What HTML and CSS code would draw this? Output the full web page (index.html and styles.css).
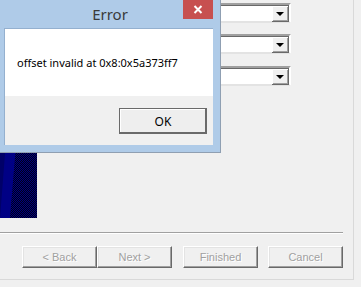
FILE: index.html
```html
<!DOCTYPE html>
<html lang="en">
<head>
    <meta charset="UTF-8">
    <meta name="viewport" content="width=device-width, initial-scale=1.0">
    <title>Setup Wizard</title>
    <link rel="stylesheet" href="styles.css">
</head>
<body>
    <div class="wizard">
        <div class="wizard-body">
            <div class="fields">
                <div class="combo"><span class="combo-value"></span><span class="combo-btn"><i class="arrow"></i></span></div>
                <div class="combo"><span class="combo-value"></span><span class="combo-btn"><i class="arrow"></i></span></div>
                <div class="combo"><span class="combo-value"></span><span class="combo-btn"><i class="arrow"></i></span></div>
            </div>
            <div class="art">
                <svg width="37" height="96" viewBox="0 0 37 96">
                    <defs>
                        <pattern id="dither" width="2" height="2" patternUnits="userSpaceOnUse">
                            <rect width="2" height="2" fill="#000018"/>
                            <rect x="0" y="0" width="1" height="1" fill="#000080"/>
                            <rect x="1" y="1" width="1" height="1" fill="#000080"/>
                        </pattern>
                    </defs>
                    <rect width="37" height="96" fill="#000068"/>
                    <polygon points="7.5,0 18,0 10,96 0,96" fill="#000085"/>
                    <polygon points="18,0 37,0 37,96 10,96" fill="url(#dither)"/>
                </svg>
            </div>
        </div>
        <div class="separator"></div>
        <div class="nav-buttons">
            <div class="pair">
                <button class="btn" disabled>&lt; Back</button>
                <button class="btn" disabled>Next &gt;</button>
            </div>
            <button class="btn finish" disabled>Finished</button>
            <button class="btn cancel" disabled>Cancel</button>
        </div>
    </div>

    <!-- error message box sits over the wizard -->
    <div class="dialog">
        <div class="titlebar">
            <span class="title">Error</span>
            <span class="close">
                <svg width="10" height="9" viewBox="0 0 10 9"><path d="M1.5 1 L8.5 8 M8.5 1 L1.5 8" stroke="#fff" stroke-width="2"/></svg>
            </span>
        </div>
        <div class="dialog-body">
            <div class="message">offset invalid at 0x8:0x5a373ff7</div>
            <div class="dialog-actions">
                <button class="ok-btn">OK</button>
            </div>
        </div>
    </div>
</body>
</html>
```

FILE: styles.css
```css
body {
    margin: 0;
    background-color: #f0f0f0;
    font-family: 'Liberation Sans', Arial, sans-serif;
    width: 361px;
    height: 287px;
    overflow: hidden;
    position: relative;
}
.wizard {
    width: 343px;
    height: 279px;
    padding-right: 10px;
    border-right: 1px solid #d9d9d9;
    border-bottom: 1px solid #d9d9d9;
    display: flex;
    flex-direction: column;
}
.wizard-body {
    height: 232px;
    display: flex;
    flex-direction: column;
}
.fields {
    padding: 3px 0 0 160px;
    display: flex;
    flex-direction: column;
    gap: 11px;
}
.fields .combo:last-child {
    margin-top: 1px;
}
.combo {
    width: 127px;
    height: 16px;
    display: flex;
    background: #fff;
    border: 2px solid;
    border-color: #a0a0a0 #fff #e3e3e3 #a0a0a0;
    box-shadow: inset 1px 1px 0 #696969;
}
.combo-value {
    flex-grow: 1;
}
.combo-btn {
    width: 16px;
    height: 15px;
    margin: 1px 0 0 0;
    background: #f0f0f0;
    border-right: 1px solid #696969;
    border-bottom: 1px solid #696969;
    box-shadow: inset 1px 1px 0 #fff, inset -1px -1px 0 #a0a0a0;
    display: flex;
    align-items: center;
    justify-content: center;
}
.arrow {
    width: 0;
    height: 0;
    border-left: 4px solid transparent;
    border-right: 4px solid transparent;
    border-top: 4px solid #000;
    margin-top: 1px;
}
.art {
    margin-top: auto;
    margin-bottom: 14px;
    height: 96px;
}
.art svg {
    display: block;
}
.separator {
    height: 1px;
    border-top: 1px solid #a0a0a0;
    background: #fff;
}
.nav-buttons {
    margin-top: 12px;
    display: flex;
    justify-content: flex-end;
}
.pair {
    display: flex;
}
.btn {
    width: 75px;
    height: 22px;
    padding: 0;
    background: #f0f0f0;
    border: 1px solid;
    border-color: #fff #696969 #696969 #fff;
    box-shadow: inset -1px -1px 0 #a0a0a0, inset 1px 1px 0 #e3e3e3;
    font-family: 'Liberation Sans', Arial, sans-serif;
    font-size: 11px;
    color: #a0a0a0;
    text-shadow: 1px 1px 0 #fff;
}
.finish {
    margin-left: 11px;
}
.cancel {
    margin-left: 10px;
}
.dialog {
    position: absolute;
    left: 0;
    top: 0;
    width: 220px;
    height: 152px;
    background: #afcbe8;
    border-right: 1px solid #8f9fb2;
    border-bottom: 1px solid #8f9fb2;
    font-family: 'Noto Sans', 'Open Sans', sans-serif;
}
.titlebar {
    position: relative;
    height: 28px;
    display: flex;
    align-items: center;
    justify-content: center;
}
.title {
    font-size: 15px;
    color: #3a3a3a;
    margin-top: -1px;
}
.close {
    position: absolute;
    right: 7px;
    top: 0;
    width: 30px;
    height: 19px;
    background: #c75050;
    display: flex;
    align-items: center;
    justify-content: center;
}
.close svg {
    display: block;
}
.dialog-body {
    margin-left: 4px;
    width: 208px;
    border-top: 1px solid #94b0cf;
    border-left: 1px solid #94b0cf;
    background: #fff;
}
.message {
    height: 67px;
    padding-left: 12px;
    display: flex;
    align-items: center;
    font-size: 11px;
    color: #000;
}
.dialog-actions {
    height: 49px;
    background: #f0f0f0;
    display: flex;
    justify-content: flex-end;
    align-items: flex-start;
}
.ok-btn {
    margin: 12px 6px 0 0;
    width: 88px;
    height: 26px;
    padding: 0;
    background: #eeeeee;
    border: 1px solid #6a6a6a;
    box-shadow: inset -1px -1px 0 #6a6a6a, inset 1px 1px 0 #fff;
    font-family: 'Noto Sans', 'Open Sans', sans-serif;
    font-size: 12px;
    color: #000;
}
```
